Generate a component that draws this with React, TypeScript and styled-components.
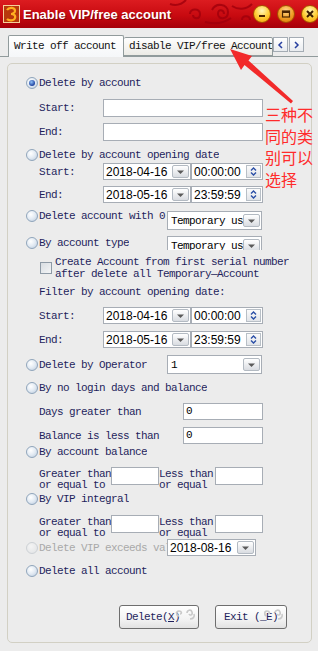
import styled, { createGlobalStyle } from 'styled-components';

const GlobalStyle = createGlobalStyle`
  html, body { margin: 0; padding: 0; background: #ececec; }
  body { font-family: 'Liberation Mono', monospace; }
`;

const Window = styled.div`
  position: relative;
  width: 318px;
  height: 651px;
  overflow: hidden;
  background: #ececec;
`;

const TitleBar = styled.div`
  position: relative;
  height: 28px;
  display: flex;
  align-items: center;
  padding-left: 3px;
  background: linear-gradient(#dc1c20 0%, #c80a10 55%, #a6000a 100%);
  overflow: hidden;
`;

const Decor = styled.svg`
  position: absolute;
  left: 150px;
  top: 0;
  pointer-events: none;
`;

const Title = styled.span`
  position: relative;
  margin-left: 3px;
  font-family: 'Liberation Sans', Arial, sans-serif;
  font-weight: bold;
  font-size: 13px;
  color: #fff;
  text-shadow: 1px 1px 0 rgba(90, 0, 0, 0.55);
`;

const Caps = styled.div`
  position: relative;
  margin-left: auto;
  margin-right: -1px;
  display: flex;
  gap: 6px;
`;

const CapBtn = styled.span<{ $dark?: boolean }>`
  width: 18px;
  height: 18px;
  box-sizing: border-box;
  border-radius: 50%;
  border: 1px solid #a35200;
  background: ${p => p.$dark
    ? 'radial-gradient(circle at 50% 30%, #ffd890 0%, #f2a22a 50%, #d67400 100%)'
    : 'radial-gradient(circle at 50% 30%, #fff6b8 0%, #ffcf38 50%, #f29a00 100%)'};
  display: flex;
  align-items: center;
  justify-content: center;
`;

const Body = styled.div`
  padding-top: 7px;
`;

const TabStrip = styled.div`
  display: flex;
  align-items: flex-end;
  height: 21px;
  padding-left: 8px;
`;

const Tab = styled.div<{ $active?: boolean; $w: number }>`
  position: relative;
  z-index: ${p => (p.$active ? 1 : 0)};
  box-sizing: border-box;
  width: ${p => p.$w}px;
  height: ${p => (p.$active ? 22 : 19)}px;
  margin-bottom: ${p => (p.$active ? -1 : 0)}px;
  padding-left: ${p => (p.$active ? 5 : 5)}px;
  border: 1px solid #919b9c;
  border-bottom: ${p => (p.$active ? 'none' : '1px solid #919b9c')};
  border-left: ${p => (p.$active ? '1px solid #919b9c' : 'none')};
  border-radius: 2px 2px 0 0;
  background: ${p => (p.$active ? 'linear-gradient(#ffffff, #f5f7f9)' : 'linear-gradient(#fefefe, #ecebe6)')};
  font-size: 11px;
  letter-spacing: -0.6px;
  line-height: ${p => (p.$active ? 21 : 17)}px;
  color: #111;
  white-space: nowrap;
  overflow: hidden;
`;

const ScrollBtn = styled.span`
  align-self: flex-start;
  margin-top: 2px;
  margin-right: 1px;
  width: 15px;
  height: 15px;
  box-sizing: border-box;
  border: 1px solid #a4acb4;
  background: linear-gradient(#ffffff, #e9ecef);
  display: flex;
  align-items: center;
  justify-content: center;
`;

const TabPage = styled.div`
  border-top: 1px solid #919b9c;
  padding: 6px 6px 0 7px;
`;

const Group = styled.div`
  box-sizing: border-box;
  width: 305px;
  height: 580px;
  border: 1px solid #d2d0c4;
  border-radius: 5px;
  padding-left: 18px;
  display: flex;
  flex-direction: column;
`;

const Row = styled.div<{ $h: number; $mt: number; $top?: boolean; $indent?: number }>`
  display: flex;
  align-items: ${p => (p.$top ? 'flex-start' : 'center')};
  height: ${p => p.$h}px;
  margin-top: ${p => p.$mt}px;
  padding-left: ${p => p.$indent ?? 0}px;
  flex: none;
`;

const Option = styled.div<{ $w?: number }>`
  display: flex;
  align-items: center;
  width: ${p => (p.$w ? `${p.$w}px` : 'auto')};
  overflow: hidden;
  flex: none;
`;

const RadioDot = styled.span<{ $checked?: boolean; $disabled?: boolean }>`
  position: relative;
  width: 12px;
  height: 12px;
  flex: none;
  box-sizing: border-box;
  border-radius: 50%;
  margin-right: 1px;
  border: 1px solid ${p => (p.$disabled ? '#cdd1d5' : '#90a5bb')};
  background: ${p => (p.$disabled
    ? 'radial-gradient(circle at 40% 35%, #f4f4f4, #e0e2e4)'
    : 'radial-gradient(circle at 38% 35%, #ffffff 0%, #e2eaf3 50%, #b7c8db 100%)')};

  &::after {
    content: '';
    display: ${p => (p.$checked ? 'block' : 'none')};
    position: absolute;
    left: 2px;
    top: 2px;
    width: 6px;
    height: 6px;
    border-radius: 50%;
    background: radial-gradient(circle at 40% 35%, #8fc0f6, #2449a6 65%, #13307a);
  }
`;

const Text = styled.span<{ $w?: number; $disabled?: boolean; $lh?: number }>`
  display: block;
  font-family: 'Liberation Mono', monospace;
  font-size: 11px;
  letter-spacing: -0.6px;
  line-height: ${p => p.$lh ?? 14}px;
  color: ${p => (p.$disabled ? '#a9a9a9' : '#1f1f5c')};
  white-space: pre;
  overflow: hidden;
  width: ${p => (p.$w ? `${p.$w}px` : 'auto')};
  flex: none;
`;

const TextBox = styled.div<{ $w: number; $h?: number }>`
  box-sizing: border-box;
  width: ${p => p.$w}px;
  height: ${p => p.$h ?? 17}px;
  border: 1px solid #a7adb5;
  background: #fff;
  padding-left: 2px;
  font-family: 'Liberation Mono', monospace;
  font-size: 11px;
  line-height: ${p => (p.$h ?? 17) - 2}px;
  color: #000;
  flex: none;
`;

const DateBox = styled.div<{ $w: number }>`
  box-sizing: border-box;
  width: ${p => p.$w}px;
  height: 17px;
  border: 1px solid #a7adb5;
  background: #fff;
  padding-left: 2px;
  display: flex;
  align-items: center;
  font-family: 'Liberation Sans', Arial, sans-serif;
  font-size: 12px;
  color: #000;
  flex: none;
`;

const Combo = styled.div<{ $w: number; $h: number }>`
  box-sizing: border-box;
  width: ${p => p.$w}px;
  height: ${p => p.$h}px;
  border: 1px solid #a7adb5;
  background: #fff;
  padding-left: 3px;
  display: flex;
  align-items: center;
  font-family: 'Liberation Mono', monospace;
  font-size: 11px;
  letter-spacing: -0.6px;
  color: #000;
  flex: none;
  overflow: hidden;
`;

const ComboClip = styled.div`
  height: 14px;
  overflow: hidden;
  align-self: flex-start;
`;

const DropBtn = styled.span`
  margin-left: auto;
  margin-right: 1px;
  width: 17px;
  height: 13px;
  box-sizing: border-box;
  border: 1px solid #b3bac2;
  border-radius: 2px;
  background: linear-gradient(#ffffff, #d9dce1);
  display: flex;
  align-items: center;
  justify-content: center;
  flex: none;
`;

const SpinBtn = styled.span`
  margin-left: auto;
  margin-right: 1px;
  width: 15px;
  height: 13px;
  box-sizing: border-box;
  border: 1px solid #b8bfc6;
  background: linear-gradient(#fbfbfb, #e1e4e8);
  display: flex;
  align-items: center;
  justify-content: center;
  flex: none;
`;

const CheckBox = styled.span`
  margin-top: 6px;
  margin-right: 3px;
  width: 12px;
  height: 12px;
  box-sizing: border-box;
  border: 1px solid #8e9aa6;
  background: linear-gradient(135deg, #d8dde2, #f4f5f6);
  flex: none;
`;

const ButtonRow = styled.div`
  display: flex;
  justify-content: flex-end;
  gap: 16px;
  margin-top: 27px;
  margin-right: 24px;
`;

const Btn = styled.button<{ $w: number; $pr?: number }>`
  position: relative;
  width: ${p => p.$w}px;
  height: 24px;
  padding: 0 ${p => p.$pr ?? 0}px 0 0;
  border: 1px solid #6e6e6e;
  border-radius: 3px;
  background: linear-gradient(#ffffff, #f3f3f3 60%, #e2e2e2);
  font-family: 'Liberation Mono', monospace;
  font-size: 11px;
  letter-spacing: -0.6px;
  color: #1f1f5c;
  overflow: hidden;

  u { text-decoration: underline; }
`;

const BtnSwirl = styled.svg`
  position: absolute;
  right: 1px;
  top: 1px;
`;

const Overlay = styled.svg`
  position: absolute;
  left: 0;
  top: 0;
  pointer-events: none;
  z-index: 5;
`;

const Note = styled.div`
  position: absolute;
  left: 265px;
  top: 104px;
  z-index: 6;
  width: 52px;
  font-family: 'Noto Sans CJK SC', sans-serif;
  font-size: 16px;
  line-height: 21.5px;
  color: #ff2b2b;
`;

function Drop() {
  return (
    <DropBtn>
      <svg width="9" height="6" viewBox="0 0 9 6">
        <path d="M1 1.5h7L4.5 5z" fill="#5a5a5a" />
      </svg>
    </DropBtn>
  );
}

function Spin() {
  return (
    <SpinBtn>
      <svg width="9" height="11" viewBox="0 0 9 11">
        <path d="M2 4.5L4.5 2 7 4.5M2 6.5L4.5 9 7 6.5" fill="none" stroke="#2a4ea6" strokeWidth="1.4" />
      </svg>
    </SpinBtn>
  );
}

function Radio({ label, w, checked, disabled }: { label: string; w?: number; checked?: boolean; disabled?: boolean }) {
  return (
    <Option $w={w}>
      <RadioDot $checked={checked} $disabled={disabled} />
      <Text $disabled={disabled}>{label}</Text>
    </Option>
  );
}

function DateRange({ label, date, time }: { label: string; date: string; time: string }) {
  return (
    <>
      <Text $w={64}>{label}</Text>
      <DateBox $w={88}>
        {date}
        <Drop />
      </DateBox>
      <DateBox $w={72}>
        {time}
        <Spin />
      </DateBox>
    </>
  );
}

function Swirl() {
  return (
    <BtnSwirl width="22" height="14" viewBox="0 0 22 14">
      <path d="M4 9c-3 0-3-5 0-5s3 3 1 3M12 6c0-3 4-4 5-1s-2 4-3 2M15 12c3 0 5-2 4-5" fill="none" stroke="#c9c9c9" strokeWidth="1.6" />
    </BtnSwirl>
  );
}

export default function App() {
  return (
    <Window>
      <GlobalStyle />
      <TitleBar>
        <Decor width="110" height="28" viewBox="0 0 110 28">
          <g fill="none" stroke="#a0000c" strokeWidth="2" opacity="0.8">
            <path d="M40 14c0-6 10-6 10 0s-7 5-7 1" />
            <path d="M62 10c4-8 16-6 16 2s-10 8-10 2 6-4 6 0" />
            <path d="M20 4c6 2 12 0 16-4M82 6c6 4 14 4 20-2M55 22c8 2 18 2 26-4" />
            <path d="M92 20c0-5 8-5 8 0" />
          </g>
        </Decor>
        <svg width="17" height="18" viewBox="0 0 17 18" style={{ position: 'relative' }}>
          <rect x="0.5" y="0.5" width="16" height="17" fill="#b8380c" stroke="#f5d09a" />
          <path d="M4 5c2-3 8-3 8 1 0 2-3 3-4 3 2 0 5 1 4 4-1 3-6 3-8 1" fill="none" stroke="#ffb020" strokeWidth="2.2" />
        </svg>
        <Title>Enable VIP/free account</Title>
        <Caps>
          <CapBtn>
            <svg width="10" height="10" viewBox="0 0 10 10"><rect x="2" y="6" width="6" height="2" fill="#4a2400" /></svg>
          </CapBtn>
          <CapBtn $dark>
            <svg width="10" height="10" viewBox="0 0 10 10"><rect x="1.5" y="2" width="7" height="6" fill="none" stroke="#4a2400" strokeWidth="1.2" /><rect x="1.5" y="2" width="7" height="2" fill="#4a2400" /></svg>
          </CapBtn>
          <CapBtn>
            <svg width="10" height="10" viewBox="0 0 10 10"><path d="M2 2l6 6M8 2l-6 6" stroke="#3a1c00" strokeWidth="2" /></svg>
          </CapBtn>
        </Caps>
      </TitleBar>

      <Body>
        <TabStrip>
          <Tab $active $w={116}>Write off account</Tab>
          <Tab $w={149}>disable VIP/free Account</Tab>
          <ScrollBtn>
            <svg width="7" height="8" viewBox="0 0 7 8"><path d="M5 1L2 4l3 3" fill="none" stroke="#2840a0" strokeWidth="1.5" /></svg>
          </ScrollBtn>
          <ScrollBtn>
            <svg width="7" height="8" viewBox="0 0 7 8"><path d="M2 1l3 3-3 3" fill="none" stroke="#2840a0" strokeWidth="1.5" /></svg>
          </ScrollBtn>
        </TabStrip>

        <TabPage>
          <Group>
            <Row $h={14} $mt={12}><Radio label="Delete by account" checked /></Row>
            <Row $h={18} $mt={9} $indent={13}><Text $w={64}>Start:</Text><TextBox $w={160} $h={18} /></Row>
            <Row $h={18} $mt={6} $indent={13}><Text $w={64}>End:</Text><TextBox $w={160} $h={18} /></Row>

            <Row $h={14} $mt={7}><Radio label="Delete by account opening date" /></Row>
            <Row $h={17} $mt={1} $indent={13}><DateRange label="Start:" date="2018-04-16" time="00:00:00" /></Row>
            <Row $h={17} $mt={6} $indent={13}><DateRange label="End:" date="2018-05-16" time="23:59:59" /></Row>

            <Row $h={21} $mt={6} $top>
              <Radio label="Delete account with 0 [Temporary user]" w={141} />
              <Combo $w={95} $h={19} style={{ marginTop: 2 }}>Temporary us<Drop /></Combo>
            </Row>
            <Row $h={14} $mt={6}>
              <Radio label="By account type" w={141} />
              <ComboClip><Combo $w={95} $h={19}>Temporary us<Drop /></Combo></ComboClip>
            </Row>
            <Row $h={24} $mt={6} $top $indent={14}>
              <CheckBox />
              <Text $lh={12}>{'Create Account from first serial number\nafter delete all Temporary\u2014Account'}</Text>
            </Row>
            <Row $h={14} $mt={5} $indent={13}><Text>Filter by account opening date:</Text></Row>
            <Row $h={17} $mt={8} $indent={13}><DateRange label="Start:" date="2018-04-16" time="00:00:00" /></Row>
            <Row $h={17} $mt={7} $indent={13}><DateRange label="End:" date="2018-05-16" time="23:59:59" /></Row>

            <Row $h={19} $mt={7}>
              <Radio label="Delete by Operator" w={141} />
              <Combo $w={95} $h={19}>1<Drop /></Combo>
            </Row>
            <Row $h={14} $mt={7}><Radio label="By no login days and balance" /></Row>
            <Row $h={17} $mt={8} $indent={13}><Text $w={144}>Days greater than</Text><TextBox $w={80}>0</TextBox></Row>
            <Row $h={17} $mt={7} $indent={13}><Text $w={144}>Balance is less than</Text><TextBox $w={80}>0</TextBox></Row>

            <Row $h={14} $mt={1}><Radio label="By account balance" /></Row>
            <Row $h={24} $mt={8} $top $indent={13}>
              <Text $w={72} $lh={11} style={{ marginTop: 2 }}>{'Greater than\nor equal to'}</Text>
              <TextBox $w={48} $h={18} />
              <Text $w={56} $lh={11} style={{ marginTop: 2 }}>{'Less than\nor equal'}</Text>
              <TextBox $w={48} $h={18} />
            </Row>
            <Row $h={14} $mt={1}><Radio label="By VIP integral" /></Row>
            <Row $h={24} $mt={9} $top $indent={13}>
              <Text $w={72} $lh={11} style={{ marginTop: 2 }}>{'Greater than\nor equal to'}</Text>
              <TextBox $w={48} $h={18} />
              <Text $w={56} $lh={11} style={{ marginTop: 2 }}>{'Less than\nor equal'}</Text>
              <TextBox $w={48} $h={18} />
            </Row>
            <Row $h={17} $mt={0}>
              <Radio label="Delete VIP exceeds valid date" w={141} disabled />
              <DateBox $w={89}>2018-08-16<Drop /></DateBox>
            </Row>
            <Row $h={14} $mt={8}><Radio label="Delete all account" /></Row>

            <ButtonRow>
              <Btn $w={80} $pr={12}>Delete(<u>X</u>)<Swirl /></Btn>
              <Btn $w={72}>Exit (_E)<Swirl /></Btn>
            </ButtonRow>
          </Group>
        </TabPage>
      </Body>

      <Overlay width="318" height="651" viewBox="0 0 318 651">
        <polygon
          points="230,49 252,56 248.5,60.5 293,101 291,103.5 244.5,65 241,70"
          fill="#f22a2a"
        />
      </Overlay>
      <Note>三种不<br />同的类<br />别可以<br />选择</Note>
    </Window>
  );
}
